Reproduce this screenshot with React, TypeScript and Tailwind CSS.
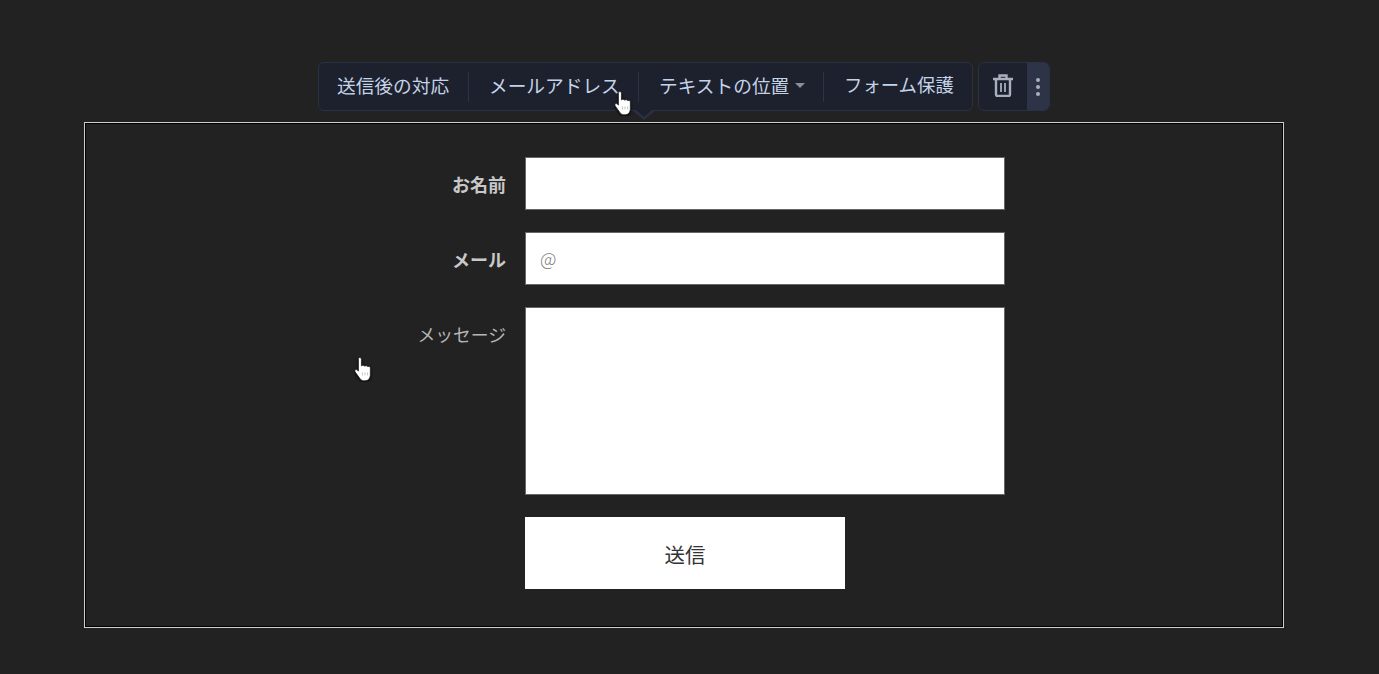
const font = "[font-family:'Noto_Sans_CJK_JP','Noto_Sans_CJK_SC',sans-serif]";

function HandCursor({ className }: { className: string }) {
  return (
    <svg className={className} width="19" height="25" viewBox="1 1 15.500 21">
      <path
        d="M5.500 1.500c.9 0 1.500.6 1.500 1.500v5.500c.5-.8 2.300-.8 2.700.3.500-.7 2.200-.6 2.700.4.600-.5 2.100-.3 2.100.9v5.700c0 3.100-1.700 5.200-4.500 5.200H9.300c-1.700 0-2.700-.7-3.600-2L1.800 13.600c-.7-1-.1-2 .8-2 .7 0 1.300.5 1.900 1.300V3c0-.9.1-1.500 1-1.500z"
        fill="#fff"
        stroke="#1a1a1a"
        strokeWidth="0.6"
        style={{ filter: 'drop-shadow(0 1px 1.500px rgba(0,0,0,.8))' }}
      />
      <path d="M7.800 14v2.500M10 14v2.500M12.200 14v2.500" stroke="#999" strokeWidth="0.5" />
    </svg>
  );
}

function Sep() {
  return <div className="h-[30px] w-px bg-[#2c3343]" />;
}

export default function App() {
  return (
    <div className={`relative min-h-screen bg-[#222222] pt-[62px] ${font}`}>
      {/* toolbar */}
      <div className="relative ml-[318px] flex h-[49px] w-[732px] gap-[5px] text-[18.700px] text-[#c5d3e8]">
        <div className="flex w-[655px] items-center rounded-md border border-[#2a3143] bg-[#1c212d]">
          <span className="ml-[18px] w-[113px] whitespace-nowrap pb-[3px]">送信後の対応</span>
          <div className="ml-[18px]"><Sep /></div>
          <span className="ml-[20px] w-[131px] whitespace-nowrap pb-[3px]">メールアドレス</span>
          <div className="ml-[18px]"><Sep /></div>
          <span className="ml-[20px] flex w-[146px] items-center whitespace-nowrap pb-[3px]">
            テキストの位置
            <span className="ml-[6px] mt-[2px] h-0 w-0 border-x-[5px] border-t-[5px] border-x-transparent border-t-[#8b8f9b]" />
          </span>
          <div className="ml-[18px]"><Sep /></div>
          <span className="ml-[20px] whitespace-nowrap pb-[3px] text-[18.400px]">フォーム保護</span>
        </div>
        <div className="flex w-[72px] overflow-hidden rounded-md border border-[#2a3143] bg-[#1c212d]">
          <div className="flex w-[48px] items-center justify-center pb-[2px]">
            <svg width="20" height="23" viewBox="0 0 20 23" fill="none" stroke="#a9afbd" strokeWidth="2.400">
              <path d="M0 5h20M6.500 5V1.500h7V5M3 5v15.500c0 .8.700 1.500 1.500 1.500h11c.8 0 1.500-.7 1.500-1.500V5" />
              <path d="M8 9v9M12 9v9" strokeWidth="1.800" />
            </svg>
          </div>
          <div className="flex flex-1 flex-col items-center justify-center gap-[3px] bg-[#2d3448]">
            <span className="h-1 w-1 rounded-full bg-[#a9afbd]" />
            <span className="h-1 w-1 rounded-full bg-[#a9afbd]" />
            <span className="h-1 w-1 rounded-full bg-[#a9afbd]" />
          </div>
        </div>
        <svg className="absolute left-[314px] top-[48px]" width="24" height="10" viewBox="0 0 24 10">
          <path d="M0 0h24L12 10z" fill="#2a3143" />
          <path d="M4 0h16L12 7z" fill="#1c212d" />
        </svg>
        <HandCursor className="absolute left-[296px] top-[29px]" />
      </div>

      {/* form frame */}
      <div className="ml-[84px] mt-[11px] h-[506px] w-[1200px] border border-[#cfcfcf] shadow-[inset_0_0_0_1px_#000000]">
        <div className="flex flex-col gap-[22px] pt-[34px]">
          <div className="flex">
            <label className="mt-[15px] w-[421px] text-right text-[18px] font-bold leading-[25px] text-[#c8c8c8]">お名前</label>
            <div className="ml-[19px] h-[53px] w-[480px] border border-[#666666] bg-white" />
          </div>
          <div className="flex">
            <label className="mt-[15px] w-[421px] text-right text-[18px] font-bold leading-[25px] text-[#c8c8c8]">メール</label>
            <div className="ml-[19px] flex h-[53px] w-[480px] items-center border border-[#666666] bg-white pl-[14px] text-[18px] font-light text-[#808080]">@</div>
          </div>
          <div className="flex">
            <label className="mt-[15px] w-[421px] text-right text-[17.800px] leading-[25px] text-[#b5b5b5]">メッセージ</label>
            <div className="ml-[19px] h-[188px] w-[480px] border border-[#666666] bg-white" />
          </div>
          <div className="ml-[440px]">
            <button className="h-[72px] w-[320px] bg-white pt-[2px] text-[20.500px] text-[#333333]">送信</button>
          </div>
        </div>
      </div>

      <HandCursor className="absolute left-[354px] top-[357px]" />
    </div>
  );
}
